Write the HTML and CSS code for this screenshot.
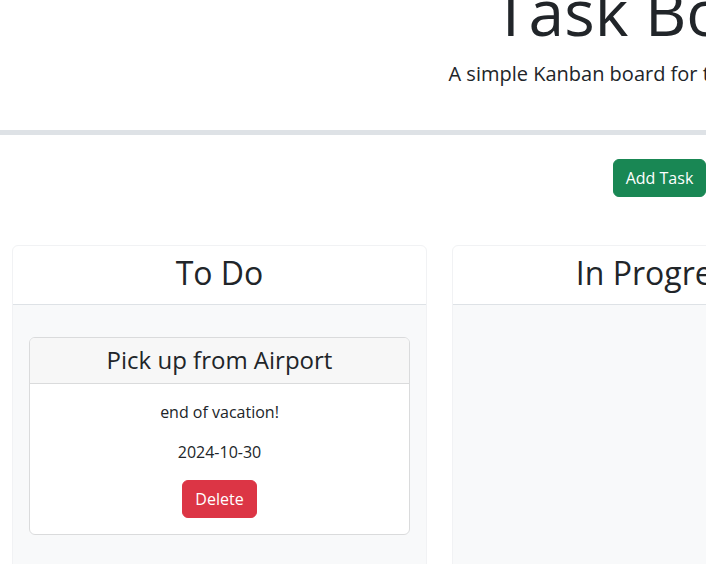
FILE: index.html
```html
<!DOCTYPE html>
<html lang="en">
<head>
<meta charset="utf-8">
<title>Task Board</title>
<link rel="stylesheet" href="styles.css">
</head>
<body>
<header class="hero">
  <h1 class="hero-title">Task Board</h1>
  <p class="hero-lead">A simple Kanban board for task management</p>
</header>
<div class="actions">
  <button class="btn btn-success">Add Task</button>
</div>
<main class="lanes">
  <section class="lane">
    <div class="lane-header"><h2 class="lane-title">To Do</h2></div>
    <div class="lane-body">
      <div class="task-card">
        <div class="task-header"><h3 class="task-title">Pick up from Airport</h3></div>
        <div class="task-body">
          <p class="task-text">end of vacation!</p>
          <p class="task-text">2024-10-30</p>
          <button class="btn btn-danger">Delete</button>
        </div>
      </div>
    </div>
  </section>
  <section class="lane">
    <div class="lane-header"><h2 class="lane-title">In Progress</h2></div>
    <div class="lane-body"></div>
  </section>
  <section class="lane">
    <div class="lane-header"><h2 class="lane-title">Done</h2></div>
    <div class="lane-body"></div>
  </section>
</main>
</body>
</html>
```
FILE: styles.css
```css
html {
  overflow: hidden;
}

body {
  margin: 0;
  width: 1319px;
  font-family: "Open Sans", "Liberation Sans", sans-serif;
  font-size: 16px;
  line-height: 1.5;
  color: #212529;
  background: #fff;
}

.hero {
  margin-top: -50px;
  margin-bottom: 24px;
  padding: 24px 0 25px;
  text-align: center;
  border-bottom: 5px solid #dee2e6;
}

.hero-title {
  margin: 0 0 8px;
  font-size: 64px;
  font-weight: 400;
  line-height: 1.2;
}

.hero-lead {
  margin: 0 0 16px;
  font-size: 20px;
  line-height: 1.5;
}

.actions {
  text-align: center;
  margin-bottom: 48px;
}

.btn {
  font-family: inherit;
  font-size: 16px;
  line-height: 24px;
  padding: 6px 12px;
  border: 1px solid transparent;
  border-radius: 6px;
  color: #fff;
}

.btn-success {
  background: #198754;
  border-color: #198754;
}

.btn-danger {
  background: #dc3545;
  border-color: #dc3545;
}

.lanes {
  display: grid;
  grid-template-columns: repeat(3, 1fr);
  gap: 25px;
  padding: 0 12px;
}

.lane {
  display: flex;
  flex-direction: column;
  border: 1px solid #f1f2f4;
  border-radius: 6px;
  overflow: hidden;
  background: #fff;
}

.lane-header {
  padding: 8px 16px;
  text-align: center;
  border-bottom: 1px solid #dee2e6;
}

.lane-title {
  margin: 0 0 4px;
  font-size: 32px;
  font-weight: 400;
  line-height: 1.2;
}

.lane-body {
  flex: 1;
  min-height: 400px;
  padding: 16px;
  background: #f8f9fa;
}

.task-card {
  margin: 16px 0;
  border: 1px solid #dadbdc;
  border-radius: 6px;
  background: #fff;
  overflow: hidden;
}

.task-header {
  padding: 8px 16px;
  text-align: center;
  background: #f7f7f7;
  border-bottom: 1px solid #dadbdc;
}

.task-title {
  margin: 0;
  font-size: 24px;
  font-weight: 400;
  line-height: 1.2;
}

.task-body {
  padding: 16px;
  text-align: center;
}

.task-text {
  margin: 0 0 16px;
}
```
